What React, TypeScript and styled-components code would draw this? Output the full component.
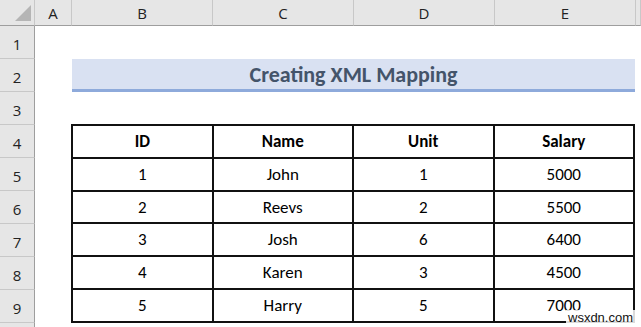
import React from 'react';
import styled, { createGlobalStyle } from 'styled-components';

const GlobalStyle = createGlobalStyle`
  html, body { margin: 0; padding: 0; background: #fff; }
  body { width: 641px; height: 327px; overflow: hidden; }
`;

const cols = ['A', 'B', 'C', 'D', 'E', ''];
const rows = [1, 2, 3, 4, 5, 6, 7, 8, 9, 10];

const data = [
  ['1', 'John', '1', '5000'],
  ['2', 'Reevs', '2', '5500'],
  ['3', 'Josh', '6', '6400'],
  ['4', 'Karen', '3', '4500'],
  ['5', 'Harry', '5', '7000'],
];

const Sheet = styled.div`
  position: relative;
  display: grid;
  grid-template-columns: 35px 37px 141px 141px 141px 141px 1fr;
  grid-template-rows: 26px repeat(9, 33px) 1fr;
  width: 641px;
  height: 327px;
  overflow: hidden;
  font-family: Carlito, Lato, 'Noto Sans', sans-serif;
`;

const Corner = styled.div`
  grid-column: 1;
  grid-row: 1;
  background: #e6e6e6;
  border-right: 1px solid #c8c8c8;
  border-bottom: 1px solid #9e9e9e;
  display: flex;
  align-items: flex-end;
  justify-content: flex-end;
  padding: 0 3px 4px 0;
  svg { display: block; }
`;

const ColHead = styled.div<{ $col: number }>`
  grid-column: ${p => p.$col};
  grid-row: 1;
  background: #e6e6e6;
  border-right: 1px solid #c8c8c8;
  border-bottom: 1px solid #9e9e9e;
  display: flex;
  align-items: center;
  justify-content: center;
  font-family: 'Open Sans', 'Noto Sans', sans-serif;
  font-size: 15px;
  color: #222;
`;

const RowHead = styled.div<{ $row: number }>`
  grid-column: 1;
  grid-row: ${p => p.$row};
  background: #e6e6e6;
  border-right: 1px solid #9e9e9e;
  border-bottom: 1px solid #c8c8c8;
  display: flex;
  align-items: center;
  justify-content: center;
  padding-top: 4px;
  font-family: 'Open Sans', 'Noto Sans', sans-serif;
  font-size: 15px;
  color: #222;
`;

const Title = styled.div`
  grid-column: 3 / 7;
  grid-row: 3;
  margin-right: 1px;
  background: #d9e1f2;
  border-bottom: 3px solid #8eaadb;
  display: flex;
  align-items: center;
  justify-content: center;
  padding-top: 1px;
  font-size: 22px;
  font-weight: 700;
  color: #44546a;
`;

const Table = styled.div`
  grid-column: 3 / 7;
  grid-row: 5 / 11;
  margin-right: 1px;
  display: grid;
  grid-template-columns: repeat(4, 1fr);
  grid-template-rows: repeat(6, 1fr);
  border-top: 2px solid #111;
  border-left: 2px solid #111;
  margin-left: -1px;
  margin-top: -1px;
`;

const Cell = styled.div<{ $head?: boolean }>`
  display: flex;
  align-items: center;
  justify-content: center;
  border-right: 2px solid #111;
  border-bottom: 2px solid #111;
  font-size: 17px;
  font-weight: ${p => (p.$head ? 700 : 400)};
  color: #000;
`;

const Watermark = styled.div`
  position: absolute;
  left: 566px;
  top: 310px;
  padding: 0 2px;
  background: rgba(255, 255, 255, 0.85);
  font-family: 'Liberation Sans', Arial, sans-serif;
  font-size: 13px;
  line-height: 15px;
  color: #111;
`;

export default function App() {
  return (
    <>
      <GlobalStyle />
      <Sheet>
        <Corner>
          <svg width="16" height="16" viewBox="0 0 16 16">
            <polygon points="16,0 16,16 0,16" fill="#b5b5b5" />
          </svg>
        </Corner>
        {cols.map((c, i) => (
          <ColHead key={i} $col={i + 2}>{c}</ColHead>
        ))}
        {rows.map(r => (
          <RowHead key={r} $row={r + 1}>{r === 10 ? '' : r}</RowHead>
        ))}
        <Title>Creating XML Mapping</Title>
        <Table>
          {['ID', 'Name', 'Unit', 'Salary'].map(h => (
            <Cell key={h} $head>{h}</Cell>
          ))}
          {data.map((row, i) =>
            row.map((v, j) => <Cell key={i + '-' + j}>{v}</Cell>)
          )}
        </Table>
        <Watermark>wsxdn.com</Watermark>
      </Sheet>
    </>
  );
}
